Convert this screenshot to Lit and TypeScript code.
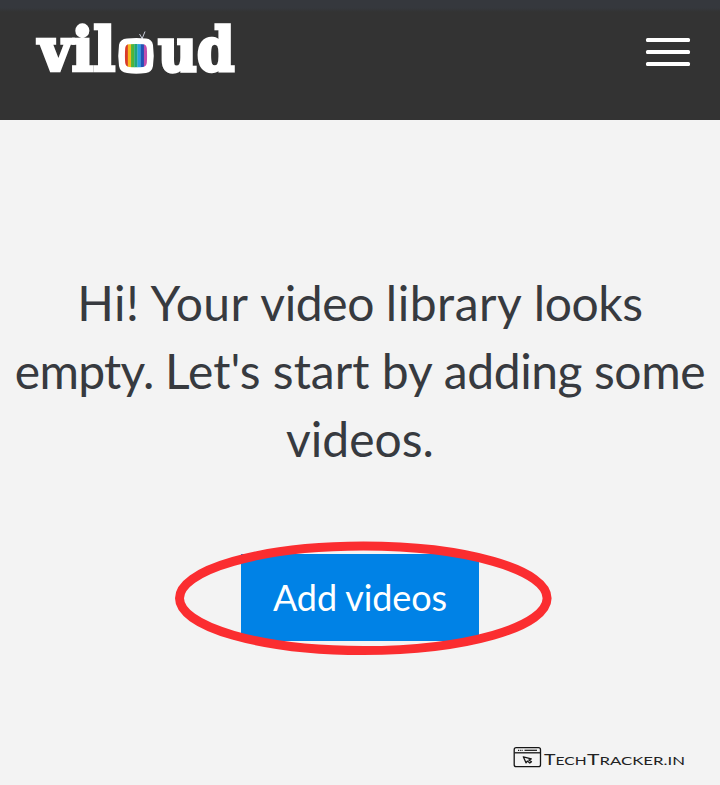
import { LitElement, html, svg, css } from "lit";
import { customElement } from "lit/decorators.js";

const STRIPES = ["#d93a2b", "#f5b921", "#4fb53a", "#1fa77c", "#2b9fe0", "#2253b5", "#c04fae"];

@customElement("viloud-logo")
class ViloudLogo extends LitElement {
  static styles = css`
    :host { display: block; width: 204px; height: 56px; }
    .logo { display: block; overflow: visible; }
    .word {
      font: bold 59px "DejaVu Serif", serif;
      fill: #fff;
      stroke: #fff;
      stroke-width: 3.4px;
    }
  `;

  render() {
    return html`
      <svg class="logo" width="204" height="56" viewBox="34 20 204 56" role="img" aria-label="viloud">
        <text class="word" y="70.8" x="38.6" textLength="76.6" lengthAdjust="spacingAndGlyphs">vil</text>
        <text class="word" y="70.8" x="158" textLength="76.4" lengthAdjust="spacingAndGlyphs">ud</text>
        <path d="M142.5 39 139.5 34M142 39 145 31.5" stroke="#c9cdda" stroke-width="1" fill="none" />
        <path d="M127 38.5Q136 37.5 146 38.5 152 39 153 45 154.5 56 153 66 152 72 146 73 136 74.5 127 73 120 72 119 66 117.5 56 119 45 120 39 127 38.5Z" fill="#fff" />
        <clipPath id="screen"><path d="M129 44.3Q136 43.6 143 44.3 146.3 44.6 146.8 48 147.6 56 146.8 63 146.3 66.6 143 67 136 67.7 129 67 125.7 66.6 125.2 63 124.4 56 125.2 48 125.7 44.6 129 44.3Z" /></clipPath>
        <g clip-path="url(#screen)">
          ${STRIPES.map((c, i) => svg`<rect x=${124.6 + i * 3.22} y="43" width="3.4" height="26" fill=${c} />`)}
        </g>
      </svg>
    `;
  }
}

@customElement("tracker-mark")
class TrackerMark extends LitElement {
  static styles = css`
    :host { display: block; width: 173px; height: 24px; }
    .mark { display: block; overflow: visible; }
    .name { font: 14.8px Lato, sans-serif; fill: #222; }
    .small { font-size: 11.8px; }
  `;

  render() {
    return html`
      <svg class="mark" width="173" height="24" viewBox="513 745 173 24">
        <g fill="none" stroke="#151515" stroke-width="1.3" stroke-linejoin="round">
          <rect x="514.2" y="747.7" width="26.3" height="19" rx="2" />
          <path d="M514.5 752.8H540.5" />
          <path d="M524.5 750.3H537" stroke-width="1.2" />
          <path d="M518 750.3H523" stroke-width="1.2" stroke-dasharray="1.2 1" />
          <path d="M523.3 756.8 531.3 758.8 528.8 760 531.5 761.7 529.8 763 527.3 761.1 526 762.8Z" />
        </g>
        <text class="name" x="544" y="765" textLength="42.6" lengthAdjust="spacingAndGlyphs">T<tspan class="small">ECH</tspan></text>
        <text class="name" x="587" y="765" textLength="98" lengthAdjust="spacingAndGlyphs">T<tspan class="small">RACKER.IN</tspan></text>
      </svg>
    `;
  }
}

@customElement("app-root")
class AppRoot extends LitElement {
  static styles = css`
    :host {
      display: flex;
      flex-direction: column;
      box-sizing: border-box;
      height: 785px;
      background: #f3f3f3;
      font-family: Lato, sans-serif;
    }
    .bar {
      display: flex;
      justify-content: space-between;
      align-items: flex-start;
      box-sizing: border-box;
      flex: none;
      height: 120px;
      padding: 20px 30px 0 34px;
      background: linear-gradient(#35383d 0, #35383d 8px, #333 12px);
    }
    .menu {
      display: flex;
      flex-direction: column;
      gap: 8px;
      width: 44px;
      padding: 0;
      margin-top: 18px;
      border: 0;
      background: none;
    }
    .line { display: block; height: 4px; border-radius: 1.5px; background: #fff; }
    .main {
      display: flex;
      flex-direction: column;
      align-items: center;
      flex: 1;
      padding-top: 149px;
    }
    .title {
      margin: 0;
      color: #373a3f;
      font-size: 48px;
      font-weight: 400;
      line-height: 68px;
      text-align: center;
      white-space: nowrap;
    }
    .wide { letter-spacing: 0.5px; }
    .snug { letter-spacing: -0.42px; }
    .tight { letter-spacing: -0.72px; }
    .action { position: relative; margin-top: 81px; }
    .add {
      display: block;
      width: 238px;
      height: 87px;
      padding: 0 0 2px;
      border: 0;
      background: #0082e6;
      color: #fff;
      font: 36px Lato, sans-serif;
      letter-spacing: -0.1px;
    }
    .ring { position: absolute; left: -66px; top: -13px; pointer-events: none; }
    .foot { display: flex; justify-content: flex-end; padding: 0 34px 16px 0; }
  `;

  render() {
    return html`
      <header class="bar">
        <viloud-logo></viloud-logo>
        <button class="menu" aria-label="Menu">
          <span class="line"></span><span class="line"></span><span class="line"></span>
        </button>
      </header>
      <main class="main">
        <h1 class="title"><span class="wide">Hi! Your </span><span class="snug">video </span><span class="wide">library </span><span class="snug">looks</span><br /><span class="tight">empty. </span>Let's start by <span class="snug">adding some</span><br />videos.</h1>
        <div class="action">
          <button class="add">Add videos</button>
          <svg class="ring" width="377" height="115" viewBox="0 0 377 115">
            <ellipse cx="188.3" cy="57.3" rx="183.8" ry="52.2" fill="none" stroke="#fb2d30" stroke-width="9" />
          </svg>
        </div>
      </main>
      <footer class="foot"><tracker-mark></tracker-mark></footer>
    `;
  }
}
